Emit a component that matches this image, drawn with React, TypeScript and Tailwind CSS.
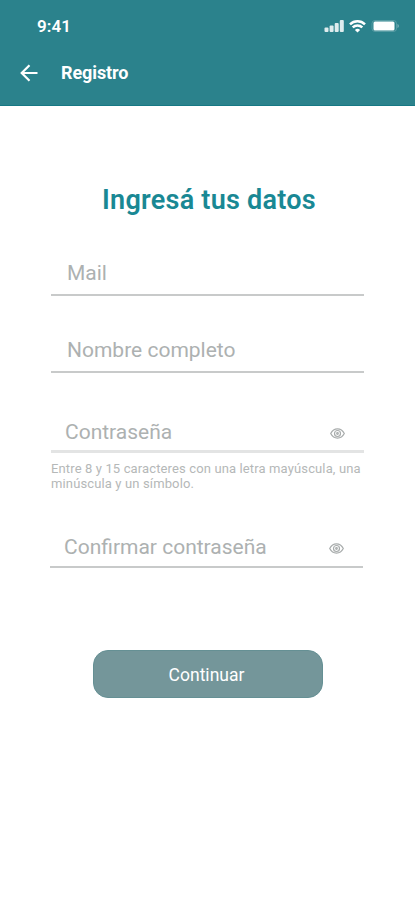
import type { ReactNode } from "react";

function StatusBar() {
  return (
    <div className="flex h-[52px] items-center justify-between pl-[37px] pr-[15px] text-white">
      <span className="text-[17px] leading-5 font-semibold tracking-[0.1px]">9:41</span>
      <div className="flex items-center gap-[5px]">
        <svg width="20" height="12" viewBox="0 0 20 12" fill="currentColor" fillOpacity=".85">
          <rect x=".5" y="7.5" width="4" height="4.5" rx="1" />
          <rect x="5.6" y="5.4" width="4" height="6.6" rx="1" />
          <rect x="10.7" y="3" width="4" height="9" rx="1" />
          <rect x="15.8" y="0" width="4" height="12" rx="1" />
        </svg>
        <svg width="17" height="13" viewBox="0 0 17 13" fill="none" stroke="currentColor" strokeWidth="2.5">
          <path d="M1 4.4a10.8 10.8 0 0 1 15 0" />
          <path d="M3.7 7.4a6.9 6.9 0 0 1 9.6 0" />
          <path d="M8.5 12.6 5.9 9.9a3.8 3.8 0 0 1 5.2 0z" fill="currentColor" stroke="none" />
        </svg>
        <svg width="29" height="12" viewBox="0 0 29 12" fill="none">
          <rect x="1" y=".5" width="24.5" height="11" rx="3" stroke="#fff" strokeOpacity=".2" />
          <rect x="2.5" y="1.5" width="21" height="9" rx="1.5" fill="#fff" />
          <path d="M26.5 4v4c.8-.3 1.3-1.1 1.3-2s-.5-1.7-1.3-2z" fill="#fff" fillOpacity=".4" />
        </svg>
      </div>
    </div>
  );
}

function EyeIcon() {
  return (
    <svg className="mt-[3px]" width="15" height="11" viewBox="0 0 15 11" fill="none" stroke="#a8acac" strokeWidth="1.2">
      <path d="M.7 5.5C2.2 2.6 4.600.9 7.500.9s5.300 1.700 6.800 4.600c-1.500 2.900-3.900 4.600-6.800 4.600S2.200 8.400.7 5.500z" />
      <circle cx="7.5" cy="5.5" r="3" />
      <circle cx="7.5" cy="5.5" r=".8" />
    </svg>
  );
}

function Field({ label, className, icon }: { label: string; className: string; icon?: ReactNode }) {
  return (
    <div className={`flex h-[46px] w-[313px] items-center justify-between ${className}`}>
      <span className="text-[21px] leading-6 text-[#adb1b1]">{label}</span>
      {icon}
    </div>
  );
}

export default function App() {
  return (
    <main className="h-[900px] w-[415px] overflow-hidden bg-white font-[Roboto,sans-serif]">
      <header className="h-[106px] border-b border-[#167884] bg-[#2b828c] text-white">
        <StatusBar />
        <div className="flex h-[42px] items-center pl-[20px]">
          <button aria-label="Volver">
            <svg width="18" height="18" viewBox="0 0 18 18" fill="none" stroke="currentColor" strokeWidth="2.2">
              <path d="M17.5 9H2M9.5 1.2 1.7 9l7.800 7.800" />
            </svg>
          </button>
          <h1 className="ml-[23px] text-[18px] font-bold leading-6 tracking-[-0.1px]">Registro</h1>
        </div>
      </header>

      <h2 className="mt-[78px] pl-[3px] text-center text-[27px] font-semibold leading-8 tracking-[0.25px] text-[#198894]">
        Ingresá tus datos
      </h2>

      <form className="flex flex-col pl-[51px]">
        <Field label="Mail" className="mt-[34px] border-b-2 border-[#c8caca] pl-[16px] pt-[2px]" />
        <Field label="Nombre completo" className="mt-[31px] border-b-2 border-[#c8caca] pl-[16px] pt-[2px]" />
        <Field
          label="Contraseña"
          className="mt-[34px] border-b-[3px] border-[#e3e4e4] pl-[14px] pr-[19px] pt-[6px]"
          icon={<EyeIcon />}
        />
        <p className="mt-[8px] w-[320px] text-[13px] leading-[15px] tracking-[0.13px] text-[#b5b8b8]">
          Entre 8 y 15 caracteres con una letra mayúscula, una minúscula y un símbolo.
        </p>
        <Field
          label="Confirmar contraseña"
          className="-ml-px mt-[31px] border-b-2 border-[#c8caca] pl-[14px] pr-[19px] pt-[6px]"
          icon={<EyeIcon />}
        />
        <button
          type="button"
          className="ml-[42px] mt-[82px] h-[48px] w-[230px] rounded-[15px] border border-[#659094] bg-[#74969a] pr-[3px] pt-[2px] text-[17.5px] text-white"
        >
          Continuar
        </button>
      </form>
    </main>
  );
}
